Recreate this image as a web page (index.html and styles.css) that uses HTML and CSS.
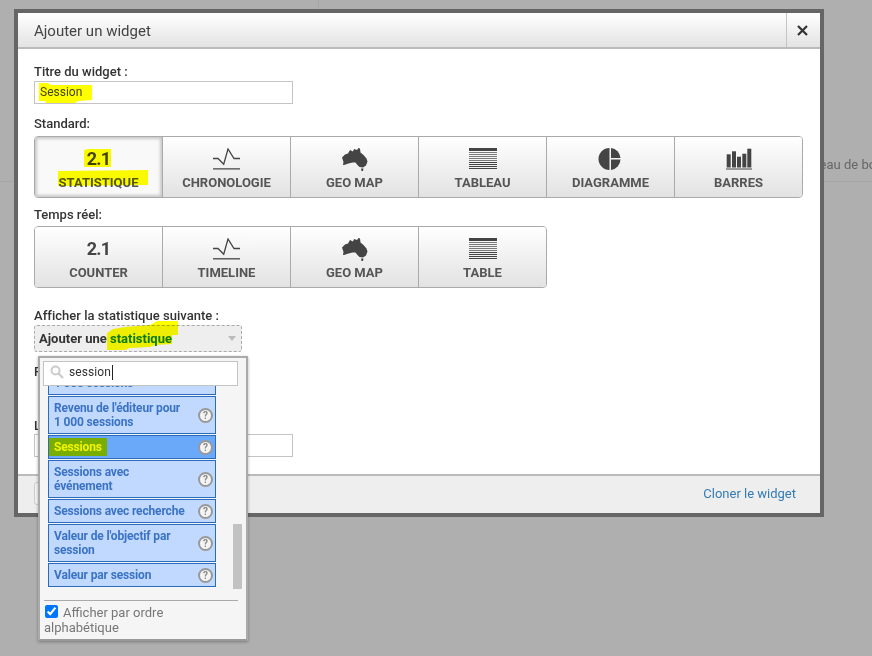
FILE: index.html
```html
<!DOCTYPE html>
<html lang="fr">
<head>
    <meta charset="UTF-8">
    <meta name="viewport" content="width=device-width, initial-scale=1.0">
    <title>Ajouter un widget</title>
    <link rel="stylesheet" href="styles.css">
</head>
<body>
    <!-- page behind the overlay -->
    <div class="backdrop">
        <div class="backdrop-top"></div>
        <div class="backdrop-row">Tableau de bord</div>
    </div>

    <div class="dialog">
        <div class="dialog-header">
            <div class="dialog-title">Ajouter un widget</div>
            <div class="dialog-close">
                <svg width="11" height="11" viewBox="0 0 11 11"><path d="M1 1l9 9M10 1l-9 9" stroke="#333" stroke-width="2.2" fill="none"/></svg>
            </div>
        </div>

        <div class="dialog-body">
            <label class="field-label">Titre du widget :</label>
            <input class="text-input" type="text" value="Session">

            <label class="field-label label-standard">Standard:</label>
            <div class="type-group">
                <div class="type-btn type-btn-active">
                    <span class="type-number">2.1</span>
                    <span class="type-name">Statistique</span>
                </div>
                <div class="type-btn">
                    <svg class="type-icon" width="28" height="23" viewBox="0 0 28 23"><use href="#icon-timeline"/></svg>
                    <span class="type-name">Chronologie</span>
                </div>
                <div class="type-btn">
                    <svg class="type-icon" width="28" height="23" viewBox="0 0 28 23"><use href="#icon-map"/></svg>
                    <span class="type-name">Geo map</span>
                </div>
                <div class="type-btn">
                    <svg class="type-icon" width="28" height="23" viewBox="0 0 28 23"><use href="#icon-table"/></svg>
                    <span class="type-name">Tableau</span>
                </div>
                <div class="type-btn">
                    <svg class="type-icon" width="28" height="23" viewBox="0 0 28 23"><use href="#icon-pie"/></svg>
                    <span class="type-name">Diagramme</span>
                </div>
                <div class="type-btn">
                    <svg class="type-icon" width="28" height="23" viewBox="0 0 28 23"><use href="#icon-bars"/></svg>
                    <span class="type-name">Barres</span>
                </div>
            </div>

            <label class="field-label label-realtime">Temps réel:</label>
            <div class="type-group">
                <div class="type-btn">
                    <span class="type-number">2.1</span>
                    <span class="type-name">Counter</span>
                </div>
                <div class="type-btn">
                    <svg class="type-icon" width="28" height="23" viewBox="0 0 28 23"><use href="#icon-timeline"/></svg>
                    <span class="type-name">Timeline</span>
                </div>
                <div class="type-btn">
                    <svg class="type-icon" width="28" height="23" viewBox="0 0 28 23"><use href="#icon-map"/></svg>
                    <span class="type-name">Geo map</span>
                </div>
                <div class="type-btn">
                    <svg class="type-icon" width="28" height="23" viewBox="0 0 28 23"><use href="#icon-table"/></svg>
                    <span class="type-name">Table</span>
                </div>
            </div>

            <label class="field-label label-stat">Afficher la statistique suivante :</label>
            <div class="stat-select">
                <span>Ajouter une <span class="stat-select-link">statistique</span></span>
                <span class="stat-select-arrow"></span>
            </div>

            <label class="field-label label-filter">F</label>
            <label class="field-label label-last">L</label>
            <input class="text-input" type="text">

            <!-- dropdown opened over the form -->
            <div class="stat-panel">
                <div class="stat-search">
                    <svg width="14" height="14" viewBox="0 0 14 14"><circle cx="5.5" cy="5.5" r="4" fill="none" stroke="#ccc" stroke-width="2"/><path d="M8.5 8.5l4.5 4.5" stroke="#ccc" stroke-width="2.4"/></svg>
                    <span class="stat-search-text">session</span>
                </div>
                <div class="stat-list">
                    <div class="stat-items">
                        <div class="stat-item"><span class="stat-item-text">1 000 sessions</span></div>
                        <div class="stat-item"><span class="stat-item-text">Revenu de l'éditeur pour<br>1 000 sessions</span><span class="help">?</span></div>
                        <div class="stat-item stat-item-selected"><span class="stat-item-text"><span class="stat-mark">Sessions</span></span><span class="help">?</span></div>
                        <div class="stat-item"><span class="stat-item-text">Sessions avec<br>événement</span><span class="help">?</span></div>
                        <div class="stat-item"><span class="stat-item-text">Sessions avec recherche</span><span class="help">?</span></div>
                        <div class="stat-item"><span class="stat-item-text">Valeur de l'objectif par session</span><span class="help">?</span></div>
                        <div class="stat-item"><span class="stat-item-text">Valeur par session</span><span class="help">?</span></div>
                    </div>
                    <div class="stat-scrollbar"></div>
                </div>
                <div class="stat-sort">
                    <input class="stat-sort-check" type="checkbox" checked>Afficher par ordre alphabétique
                </div>
            </div>
        </div>

        <div class="dialog-footer">
            <button class="footer-btn" type="button"></button>
            <a class="clone-link" href="#">Cloner le widget</a>
        </div>
    </div>

    <!-- yellow marker strokes drawn on top of the screenshot -->
    <svg class="marker-layer" width="872" height="656" viewBox="0 0 872 656">
        <path d="M39 83h9l3 2h41v15l-14 1-3 2H46l-1-2h-6z"/>
        <path d="M84 150l4-1h23v18H84z"/>
        <path d="M58 171l90-1v15l-90 1z"/>
        <path d="M107 333l6-4 12-2 25-2 7-4h21v14h-6v9l-17 1-5 2-20 1-5 2h-18z"/>
    </svg>

    <svg class="icon-defs" width="0" height="0">
        <defs>
            <g id="icon-timeline" fill="none" stroke="#444" stroke-width="1.3">
                <path d="M0 10.5h5l5.700 5.700L15 1l6 9.500h6"/>
                <path d="M0 20.800h27"/>
            </g>
            <g id="icon-map" fill="#444">
                <path d="M1 9.500l3-3 3-1 2-3.500 3 1.500L13 1l3 1 1.500-2 1.500.500.500 4 3 2.500 3 3.500 1 3-1.500 4-3 2-3.500-.500-2.500-2.500-1.500-2h-3l-4 1-4.500 1.500L2 17l.500-3z"/>
                <path d="M20 20.500h2.500L22 23h-1.500z"/>
            </g>
            <g id="icon-table" fill="#444">
                <rect x="0" y="0" width="28" height="3"/>
                <rect x="0" y="4" width="28" height="1" opacity=".7"/>
                <rect x="0" y="6" width="28" height="1" opacity=".7"/>
                <rect x="0" y="8" width="28" height="1" opacity=".7"/>
                <rect x="0" y="10" width="28" height="1" opacity=".7"/>
                <rect x="0" y="12" width="28" height="1" opacity=".7"/>
                <rect x="0" y="14" width="28" height="1"/>
                <rect x="0" y="16" width="28" height="1"/>
                <rect x="0" y="18" width="28" height="1"/>
                <rect x="0" y="20" width="28" height="1"/>
            </g>
            <g id="icon-pie" fill="#444">
                <path d="M12.500 0v22a11 11 0 0 1 0-22z"/>
                <path d="M14 0a11 11 0 0 1 9.500 10H14z"/>
                <path d="M14 22a11 11 0 0 0 9.500-10.500H14z"/>
            </g>
            <g id="icon-bars" fill="#444">
                <rect x="1.700" y="6.300" width="4" height="13.200"/>
                <rect x="7" y="3.300" width="4" height="16.200"/>
                <rect x="12" y="8.700" width="4" height="10.800"/>
                <rect x="17.300" y="5.700" width="4" height="13.800"/>
                <rect x="22.300" y=".700" width="4" height="18.800"/>
                <rect x="1" y="20.500" width="26" height="1"/>
            </g>
        </defs>
    </svg>
</body>
</html>
```

FILE: styles.css
```css
* {
    box-sizing: border-box;
}
html, body {
    height: 100%;
}
body {
    margin: 0;
    overflow: hidden;
    background-color: #afafaf;
    font-family: Roboto, "Liberation Sans", sans-serif;
    color: #333;
}

/* page behind */
.backdrop-top {
    width: 319px;
    height: 9px;
    border-right: 1px solid #a6a6a6;
}
.backdrop-row {
    height: 173px;
    padding: 148px 0 0 795px;
    border-bottom: 1px solid #a6a6a6;
    font-size: 13px;
    line-height: 16px;
    color: #666;
    white-space: nowrap;
}

/* dialog */
.dialog {
    position: absolute;
    left: 14px;
    top: 9px;
    width: 810px;
    height: 508px;
    display: flex;
    flex-direction: column;
    border: 4px solid #666;
    background-color: #fff;
}
.dialog-header {
    display: flex;
    height: 36px;
    flex-shrink: 0;
    background: linear-gradient(#fff, #e3e3e3);
    border-bottom: 2px solid #bbb;
}
.dialog-title {
    flex: 1;
    padding: 9px 16px 0;
    font-size: 15px;
    line-height: 18px;
    color: #444;
}
.dialog-close {
    width: 34px;
    display: flex;
    align-items: center;
    justify-content: center;
    border-left: 1px solid #c4c4c4;
    padding-right: 2px;
}
.dialog-body {
    position: relative;
    flex: 1;
    padding: 14px 16px 0;
}
.dialog-footer {
    display: flex;
    align-items: center;
    justify-content: space-between;
    height: 39px;
    flex-shrink: 0;
    padding: 0 24px 2px 16px;
    background-color: #eee;
    border-top: 2px solid #bbb;
}
.footer-btn {
    width: 80px;
    height: 23px;
    background-color: #f5f5f5;
    border: 1px solid #ccc;
    border-radius: 3px;
}
.clone-link {
    font-size: 13px;
    color: #337ab7;
    text-decoration: none;
}

/* form */
.field-label {
    display: block;
    height: 16px;
    margin-bottom: 2px;
    padding-top: 1px;
    font-size: 13px;
    font-weight: 500;
    line-height: 16px;
    color: #333;
}
.label-standard {
    margin-top: 11px;
    margin-bottom: 5px;
}
.label-realtime {
    margin-top: 8px;
    margin-bottom: 4px;
}
.label-stat {
    margin-top: 19px;
    letter-spacing: 0.03px;
}
.label-filter {
    margin-top: 11px;
}
.label-last {
    margin-top: 38px;
    margin-bottom: 1px;
}
.text-input {
    display: block;
    width: 259px;
    height: 23px;
    padding: 0 4px 2px 5px;
    border: 1px solid #c4c4c4;
    background-color: #fff;
    font-family: inherit;
    font-size: 12px;
    color: #444;
}

/* widget type buttons */
.type-group {
    display: inline-flex;
    vertical-align: top;
    height: 62px;
    border: 1px solid #aaa;
    border-radius: 4px;
    overflow: hidden;
}
.type-btn {
    width: 128px;
    display: flex;
    flex-direction: column;
    align-items: center;
    padding-top: 11px;
    background: linear-gradient(#fff, #e2e2e2);
    border-right: 1px solid #aaa;
}
.type-btn:last-child {
    width: 127px;
    border-right: none;
}
.type-btn-active {
    background: #f9f9f9;
    box-shadow: inset 0 0 3px 2px #c8c8c8;
}
.type-icon {
    display: block;
    flex-shrink: 0;
}
.type-number {
    height: 23px;
    font-size: 18px;
    font-weight: 700;
    line-height: 21px;
    letter-spacing: -0.8px;
    color: #444;
}
.type-name {
    margin-top: 4px;
    font-size: 13px;
    font-weight: 700;
    line-height: 16px;
    text-transform: uppercase;
    color: #555;
}

/* statistic select */
.stat-select {
    display: flex;
    align-items: center;
    justify-content: space-between;
    width: 208px;
    height: 27px;
    padding: 0 5px 0 4px;
    background-color: #eee;
    border: 1px dashed #aaa;
    border-radius: 3px;
    font-size: 13px;
    font-weight: 700;
}
.stat-select-link {
    color: #0a7a00;
}
.stat-select-arrow {
    border-left: 4px solid transparent;
    border-right: 4px solid transparent;
    border-top: 5px solid #bbb;
}
.stat-panel {
    position: absolute;
    left: 20px;
    top: 307px;
    width: 210px;
    height: 285px;
    padding: 3px 0 0;
    background-color: #f5f5f5;
    border: 2px solid #aaa;
    border-bottom-color: #999;
    box-shadow: 0 1px 3px rgba(0, 0, 0, 0.3);
}
.stat-search {
    position: relative;
    z-index: 1;
    display: flex;
    gap: 5px;
    width: 195px;
    height: 25px;
    margin-left: 3px;
    padding: 3px 0 0 6px;
    background-color: #fff;
    border: 1px solid #c4c4c4;
    font-size: 12px;
}
.stat-search-text {
    height: 15px;
    border-right: 1px solid #222;
    padding-right: 1px;
    line-height: 14px;
    letter-spacing: 0.1px;
}
.stat-list {
    position: relative;
    height: 204px;
    overflow: hidden;
}
.stat-items {
    display: flex;
    flex-direction: column;
    gap: 1px;
    width: 168px;
    margin: -15px 0 0 8px;
}
.stat-item {
    display: flex;
    align-items: center;
    padding: 4px 2px 4px 5px;
    background-color: #c2d9ff;
    border: 1px solid #2a6bbd;
    font-size: 12px;
    font-weight: 700;
    line-height: 14px;
    letter-spacing: -0.15px;
    color: #3b73c4;
}
.stat-item-selected {
    background-color: #6aa9fa;
    color: #f4f400;
}
.stat-mark {
    padding: 2px 5px;
    margin-left: -5px;
    background-color: #79ae00;
}
.stat-item-text {
    flex: 1;
}
.help {
    flex-shrink: 0;
    width: 15px;
    height: 15px;
    margin: -1px 0;
    border: 2px solid #999;
    border-radius: 50%;
    background-color: #f4f4f4;
    font-size: 10px;
    font-weight: 700;
    line-height: 11px;
    letter-spacing: 0;
    text-align: center;
    color: #888;
}
.stat-scrollbar {
    position: absolute;
    left: 193px;
    top: 138px;
    width: 9px;
    height: 65px;
    background-color: #c2c2c2;
}
.stat-sort {
    margin: 10px 8px 0 4px;
    padding-top: 4px;
    border-top: 1px solid #aaa;
    font-size: 13px;
    line-height: 15px;
    color: #777;
}
.stat-sort-check {
    width: 13px;
    height: 13px;
    margin: 0 5px 0 1px;
    vertical-align: -1px;
}

/* annotations */
.marker-layer {
    position: absolute;
    left: 0;
    top: 0;
    fill: #ffff00;
    mix-blend-mode: multiply;
    pointer-events: none;
}
.icon-defs {
    position: absolute;
}
```
